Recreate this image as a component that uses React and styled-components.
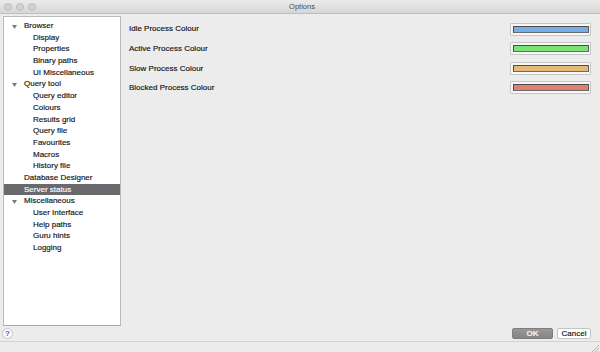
import React from 'react';
import styled, { createGlobalStyle } from 'styled-components';

const GlobalStyle = createGlobalStyle`
  html, body { margin: 0; padding: 0; }
  body {
    width: 600px;
    height: 352px;
    overflow: hidden;
    background: #ececec;
    font-family: "Liberation Sans", Arial, sans-serif;
  }
`;

const Window = styled.div`
  width: 600px;
  height: 352px;
  display: flex;
  flex-direction: column;
  background: #ececec;
  color: #111;
  font-size: 8px;
  -webkit-text-stroke: 0.15px currentColor;
`;

const TitleBar = styled.div`
  height: 13px;
  display: grid;
  grid-template-columns: 1fr auto 1fr;
  align-items: center;
  background: linear-gradient(#ebebeb, #d6d6d6);
  border-bottom: 1px solid #bdbdbd;
  padding-left: 4px;
`;

const Lights = styled.div`
  display: flex;
  gap: 4px;
`;

const Light = styled.span`
  width: 8px;
  height: 8px;
  box-sizing: border-box;
  border-radius: 50%;
  background: #d2d2d2;
  border: 1px solid #bcbcbc;
`;

const Title = styled.div`
  font-size: 7.5px;
  color: #4a4a4a;
  -webkit-text-stroke: 0;
`;

const Main = styled.div`
  flex: 1;
  display: flex;
  min-height: 0;
  padding-top: 2px;
`;

const Tree = styled.ul`
  list-style: none;
  margin: 0 0 0 3px;
  padding: 3px 0 0;
  width: 118px;
  box-sizing: border-box;
  background: #fff;
  border: 1px solid #b9b9b9;
  border-bottom-color: #a9a9a9;
`;

const TreeRow = styled.li`
  height: 11.7px;
  line-height: 11.7px;
  display: flex;
  align-items: center;
  padding-left: ${(p) => (p.$level === 2 ? 29 : 20)}px;
  position: relative;
  white-space: nowrap;
  background: ${(p) => (p.$selected ? '#6a6a6e' : 'transparent')};
  color: ${(p) => (p.$selected ? '#ffffff' : '#111')};
`;

const Disclosure = styled.svg`
  position: absolute;
  left: 8px;
  top: 4.5px;
`;

const Settings = styled.div`
  flex: 1;
  padding: 4px 9px 0 8px;
  display: flex;
  flex-direction: column;
`;

const ColourRow = styled.div`
  height: 19.3px;
  display: flex;
  align-items: center;
  justify-content: space-between;
`;

const Label = styled.span`
  position: relative;
  top: ${(p) => (p.$first ? -1.5 : 0)}px;
`;

const Well = styled.div`
  width: 81px;
  height: 13px;
  box-sizing: border-box;
  padding: 2px 1px 2px 2px;
  background: #f7f7f7;
  border: 1px solid #c6c6c6;
  border-radius: 1px;
`;

const Fill = styled.div`
  height: 100%;
  box-sizing: border-box;
  background: ${(p) => p.$colour};
  border: 1px solid #4c4c4c;
  border-bottom-color: #6a6a6a;
  border-right-color: #5a5a5a;
`;

const ActionRow = styled.div`
  height: 15px;
  display: flex;
  align-items: center;
  padding: 0 9px 0 2px;
`;

const HelpButton = styled.div`
  width: 11px;
  height: 11px;
  box-sizing: border-box;
  border-radius: 50%;
  background: #fdfdfd;
  border: 1px solid #c4c4c4;
  color: #3b7fe0;
  font-weight: bold;
  font-size: 8px;
  line-height: 9px;
  text-align: center;
`;

const Buttons = styled.div`
  margin-left: auto;
  display: flex;
  gap: 4px;
`;

const Button = styled.div`
  width: ${(p) => p.$width}px;
  height: 11px;
  box-sizing: border-box;
  border-radius: 2px;
  font-size: 8px;
  line-height: 9px;
  text-align: center;
  background: ${(p) => (p.$primary ? 'linear-gradient(#999, #848484)' : '#fff')};
  border: 1px solid ${(p) => (p.$primary ? '#7d7d7d' : '#c3c3c3')};
  color: ${(p) => (p.$primary ? '#f2f2f2' : '#111')};
  font-weight: ${(p) => (p.$primary ? 'bold' : 'normal')};
`;

const StatusBar = styled.div`
  height: 10px;
  border-top: 1px solid #d2d2d2;
  display: flex;
  justify-content: flex-end;
  align-items: flex-end;
  padding-right: 1px;
`;

const tree = [
  { label: 'Browser', level: 1, open: true },
  { label: 'Display', level: 2 },
  { label: 'Properties', level: 2 },
  { label: 'Binary paths', level: 2 },
  { label: 'UI Miscellaneous', level: 2 },
  { label: 'Query tool', level: 1, open: true },
  { label: 'Query editor', level: 2 },
  { label: 'Colours', level: 2 },
  { label: 'Results grid', level: 2 },
  { label: 'Query file', level: 2 },
  { label: 'Favourites', level: 2 },
  { label: 'Macros', level: 2 },
  { label: 'History file', level: 2 },
  { label: 'Database Designer', level: 1 },
  { label: 'Server status', level: 1, selected: true },
  { label: 'Miscellaneous', level: 1, open: true },
  { label: 'User Interface', level: 2 },
  { label: 'Help paths', level: 2 },
  { label: 'Guru hints', level: 2 },
  { label: 'Logging', level: 2 },
];

const colours = [
  { label: 'Idle Process Colour', colour: '#76ade2' },
  { label: 'Active Process Colour', colour: '#78e476' },
  { label: 'Slow Process Colour', colour: '#e2b977' },
  { label: 'Blocked Process Colour', colour: '#e1806f' },
];

function App() {
  return (
    <Window>
      <GlobalStyle />
      <TitleBar>
        <Lights>
          <Light />
          <Light />
          <Light />
        </Lights>
        <Title>Options</Title>
        <div />
      </TitleBar>
      <Main>
        <Tree>
          {tree.map((item) => (
            <TreeRow key={item.label} $level={item.level} $selected={item.selected}>
              {item.open && (
                <Disclosure width="5" height="4" viewBox="0 0 5 4">
                  <polygon points="0,0 5,0 2.5,4" fill="#7a7a7a" />
                </Disclosure>
              )}
              {item.label}
            </TreeRow>
          ))}
        </Tree>
        <Settings>
          {colours.map((c, i) => (
            <ColourRow key={c.label}>
              <Label $first={i === 0}>{c.label}</Label>
              <Well>
                <Fill $colour={c.colour} />
              </Well>
            </ColourRow>
          ))}
        </Settings>
      </Main>
      <ActionRow>
        <HelpButton>?</HelpButton>
        <Buttons>
          <Button $primary $width={41}>OK</Button>
          <Button $width={34}>Cancel</Button>
        </Buttons>
      </ActionRow>
      <StatusBar>
        <svg width="8" height="8" viewBox="0 0 8 8">
          <path d="M8 1 L1 8 M8 4 L4 8 M8 7 L7 8" stroke="#a8a8a8" strokeWidth="0.8" />
        </svg>
      </StatusBar>
    </Window>
  );
}

export default App;
